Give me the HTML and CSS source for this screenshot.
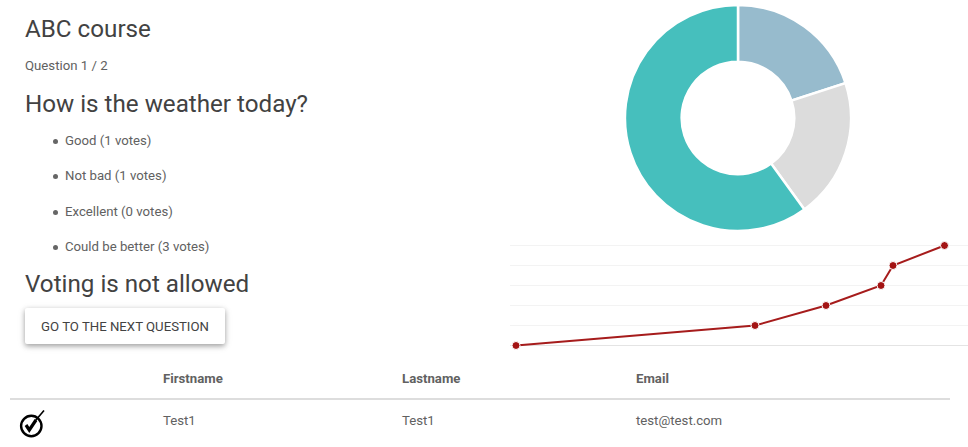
FILE: index.html
```html
<!DOCTYPE html>
<html lang="en">
<head>
  <meta charset="UTF-8">
  <meta name="viewport" content="width=device-width, initial-scale=1.0">
  <title>ABC course</title>
  <link rel="stylesheet" href="styles.css">
</head>
<body>
  <div class="top">
    <div class="question">
      <h1>ABC course</h1>
      <p class="counter">Question 1 / 2</p>
      <h2>How is the weather today?</h2>
      <ul class="answers">
        <li>Good (1 votes)</li>
        <li>Not bad (1 votes)</li>
        <li>Excellent (0 votes)</li>
        <li>Could be better (3 votes)</li>
      </ul>
      <h2 class="notice">Voting is not allowed</h2>
      <button class="next-btn" type="button">Go to the next question</button>
    </div>

    <div class="charts">
      <svg class="donut" width="230" height="230" viewBox="0 0 230 230">
        <path fill="#97bbcd" stroke="#fff" stroke-width="2.500" d="M115 2 A113 113 0 0 1 222.500 80.100 L168.500 97.600 A56.300 56.300 0 0 0 115 58.700 Z"/>
        <path fill="#dcdcdc" stroke="#fff" stroke-width="2.500" d="M222.500 80.100 A113 113 0 0 1 181.400 206.400 L148.100 160.500 A56.300 56.300 0 0 0 168.500 97.600 Z"/>
        <path fill="#46bfbd" stroke="#fff" stroke-width="2.500" d="M181.400 206.400 A113 113 0 1 1 115 2 L115 58.700 A56.300 56.300 0 1 0 148.100 160.500 Z"/>
      </svg>
      <svg class="line" width="458" height="110" viewBox="0 0 458 110">
        <g stroke="#f3f3f3" stroke-width="1">
          <line x1="0" y1="5.500" x2="458" y2="5.500"/>
          <line x1="0" y1="25.500" x2="458" y2="25.500"/>
          <line x1="0" y1="45.500" x2="458" y2="45.500"/>
          <line x1="0" y1="65.500" x2="458" y2="65.500"/>
          <line x1="0" y1="85.500" x2="458" y2="85.500"/>
        </g>
        <line x1="0" y1="105.500" x2="458" y2="105.500" stroke="#e4e4e4"/>
        <polyline fill="none" stroke="#a61c1c" stroke-width="2" points="6,105.500 245,85.500 316,65.500 371,45.500 383,25.500 434.500,5.500"/>
        <g fill="#a31313" stroke="#fff" stroke-width="1">
          <circle cx="6" cy="105.500" r="4"/>
          <circle cx="245" cy="85.500" r="4"/>
          <circle cx="316" cy="65.500" r="4"/>
          <circle cx="371" cy="45.500" r="4"/>
          <circle cx="383" cy="25.500" r="4"/>
          <circle cx="434.500" cy="5.500" r="4"/>
        </g>
      </svg>
    </div>
  </div>

  <table class="students">
    <thead>
      <tr>
        <th class="col-icon"></th>
        <th class="col-first">Firstname</th>
        <th class="col-last">Lastname</th>
        <th>Email</th>
      </tr>
    </thead>
    <tbody>
      <tr>
        <td>
          <svg class="check" width="26" height="28" viewBox="0 0 26 28">
            <circle cx="12.300" cy="16" r="10.200" fill="none" stroke="#000" stroke-width="2.400"/>
            <path fill="none" stroke="#000" stroke-width="3.200" d="M7 15 L10.300 20 L17 10"/>
            <path fill="none" stroke="#000" stroke-width="1.600" d="M16.500 10.500 L25 0.500"/>
          </svg>
        </td>
        <td>Test1</td>
        <td>Test1</td>
        <td>test@test.com</td>
      </tr>
    </tbody>
  </table>
</body>
</html>
```

FILE: styles.css
```css
html {
  overflow: hidden;
}

body {
  font-family: Roboto, "Liberation Sans", sans-serif;
  margin: 0;
  color: rgba(0, 0, 0, 0.87);
  height: 447px;
  overflow: hidden;
}

.top {
  display: flex;
}

.question {
  width: 510px;
  padding-left: 25px;
  box-sizing: border-box;
}

h1 {
  font-size: 24.200px;
  font-weight: 400;
  line-height: 30px;
  margin: 14px 0 0;
  color: #424242;
}

h2 {
  font-size: 24.200px;
  font-weight: 400;
  line-height: 30px;
  margin: 0;
  color: #424242;
}

.counter {
  font-size: 13.200px;
  line-height: 20px;
  margin: 12px 0 13px;
  color: #616161;
}

.answers {
  list-style: none;
  margin: 12px 0 0;
  padding: 0 0 0 40px;
}

.answers li {
  font-size: 13.200px;
  line-height: 20px;
  margin-bottom: 15.400px;
  color: #616161;
  position: relative;
}

.answers li::before {
  content: "";
  position: absolute;
  left: -12px;
  top: 8px;
  width: 5px;
  height: 5px;
  border-radius: 50%;
  background: #666;
}

.notice {
  margin-top: -4px;
}

.next-btn {
  display: block;
  margin-top: 9px;
  width: 200px;
  height: 36px;
  padding: 2px 0 0;
  border: none;
  border-radius: 2px;
  background: #fff;
  color: #424242;
  font-family: inherit;
  font-size: 13.200px;
  text-transform: uppercase;
  box-shadow: 0 2px 5px rgba(0, 0, 0, 0.3), 0 2px 8px rgba(0, 0, 0, 0.12);
}

.charts {
  width: 458px;
  display: flex;
  flex-direction: column;
  align-items: center;
}

.donut {
  display: block;
  margin: 2.500px 0 0 -3px;
}

.line {
  display: block;
  margin-top: 7.500px;
}

.students {
  width: 940px;
  margin: 4px 0 0 10px;
  border-collapse: collapse;
  font-size: 13.200px;
  color: #616161;
}

.students th {
  text-align: left;
  font-weight: 700;
  height: 40px;
  padding: 4px 0 0;
  border-bottom: 2px solid #ddd;
}

.students td {
  padding: 0;
  height: 41px;
}

.col-icon {
  width: 153px;
}

.col-first {
  width: 239px;
}

.col-last {
  width: 234px;
}

.check {
  display: block;
  margin: 6px 0 0 9px;
}
```
